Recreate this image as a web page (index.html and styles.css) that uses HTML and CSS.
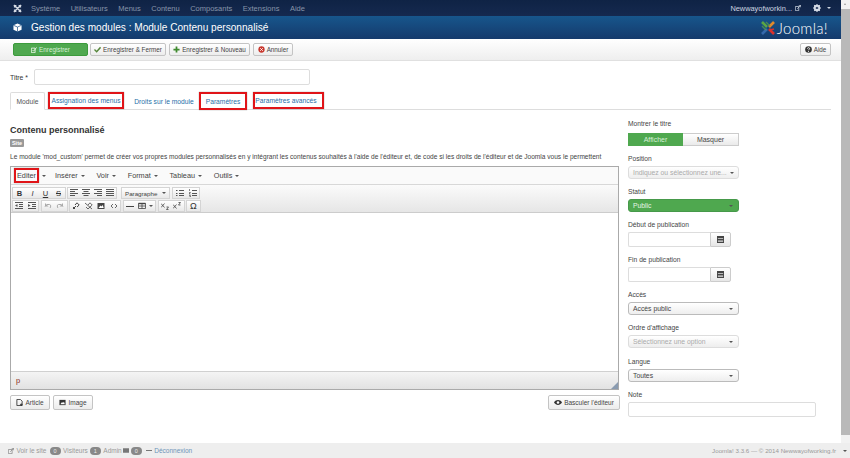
FILE: index.html

```html
<!DOCTYPE html>
<html lang="fr">
<head>
<meta charset="utf-8">
<title>Gestion des modules : Module Contenu personnalisé</title>
<link rel="stylesheet" href="styles.css">
</head>
<body>
<svg class="defs" width="0" height="0">
  <symbol id="lines-l" viewBox="0 0 8 8"><path d="M0 .5h8M0 2.500h5M0 4.500h8M0 6.500h5" stroke="#555" fill="none"/></symbol>
  <symbol id="lines-c" viewBox="0 0 8 8"><path d="M0 .5h8M1.500 2.500h5M0 4.500h8M1.500 6.500h5" stroke="#555" fill="none"/></symbol>
  <symbol id="lines-r" viewBox="0 0 8 8"><path d="M0 .5h8M3 2.500h5M0 4.500h8M3 6.500h5" stroke="#555" fill="none"/></symbol>
  <symbol id="lines-j" viewBox="0 0 8 8"><path d="M0 .5h8M0 2.500h8M0 4.500h8M0 6.500h8" stroke="#555" fill="none"/></symbol>
  <symbol id="cal" viewBox="0 0 8 8"><path d="M0 0h8v8H0z" fill="#444"/><path d="M1 2.500h6v1H1zM1 5h6v1.500H1z" fill="#ddd"/></symbol>
</svg>
<div class="shell">
  <div class="top">
    <div class="main">
      <nav class="navbar">
        <svg class="jicon" viewBox="0 0 10 10" width="9" height="9"><path d="M1 1l8 8M9 1l-8 8M3 1v2H1M7 1v2h2M1 7h2v2M9 7H7v2" stroke="#d5dbe5" stroke-width="1.600" fill="none"/></svg>
        <a class="nav-item">Système</a>
        <a class="nav-item">Utilisateurs</a>
        <a class="nav-item">Menus</a>
        <a class="nav-item">Contenu</a>
        <a class="nav-item">Composants</a>
        <a class="nav-item">Extensions</a>
        <a class="nav-item">Aide</a>
        <span class="nav-right">
          <span class="site-name">Newwayofworkin...</span>
          <svg viewBox="0 0 8 8" width="6" height="6"><path d="M.5 2h4.500v5.500H.5zM3 5l4.500-4.500M5 .5h2.500V3" stroke="#cdd5e0" fill="none"/></svg>
          <svg class="gear" viewBox="0 0 10 10" width="8" height="8"><circle cx="5" cy="5" r="3" fill="none" stroke="#d5dbe5" stroke-width="2"/><path d="M5 0v10M0 5h10M1.500 1.500l7 7M8.500 1.500l-7 7" stroke="#d5dbe5" stroke-width="1.300"/><circle cx="5" cy="5" r="1.300" fill="#14294f"/></svg>
          <span class="caret light"></span>
        </span>
      </nav>
      <header class="titlebar">
        <svg viewBox="0 0 10 10" width="9" height="9"><path d="M5 .5l4.500 2v5L5 9.500l-4.500-2v-5z" fill="#fff"/><path d="M.5 2.500L5 4.500l4.500-2M5 4.500v5" stroke="#1a4f85" stroke-width=".8" fill="none"/></svg>
        <h1>Gestion des modules : Module Contenu personnalisé</h1>
        <div class="logo">
          <svg viewBox="0 0 16 16" width="16" height="16">
            <path d="M2 2l5 5" stroke="#5aa544" stroke-width="2.600"/>
            <path d="M14 2L9 7" stroke="#e08a2c" stroke-width="2.600"/>
            <path d="M2 14l5-5" stroke="#3569ad" stroke-width="2.600"/>
            <path d="M14 14L9 9" stroke="#d9302c" stroke-width="2.600"/>
            <path d="M2 6l4 4M6 2l4 4" stroke="#5aa544" stroke-width="1.400" opacity=".7"/>
            <path d="M10 10l4-1" stroke="#d9302c" stroke-width="1.800"/>
          </svg>
          <span class="logo-text">Joomla!</span>
        </div>
      </header>
      <div class="toolbar">
        <button class="btn btn-green"><svg viewBox="0 0 8 8" width="6" height="6"><path d="M.5 1.500h5v6h-5z" fill="none" stroke="#fff"/><path d="M2 4l1.500 1.500L7.500.5" stroke="#fff" fill="none"/></svg>Enregistrer</button>
        <button class="btn save-close"><svg viewBox="0 0 8 8" width="7" height="7"><path d="M.5 4l2.500 2.500L7.500 1.500" stroke="#55863a" stroke-width="1.700" fill="none"/></svg>Enregistrer &amp; Fermer</button>
        <button class="btn save-new"><svg viewBox="0 0 8 8" width="7" height="7"><path d="M4 .5v7M.5 4h7" stroke="#3f8a2e" stroke-width="2"/></svg>Enregistrer &amp; Nouveau</button>
        <button class="btn cancel"><svg viewBox="0 0 8 8" width="7" height="7"><circle cx="4" cy="4" r="3.600" fill="#c9382e"/><path d="M2.500 2.500l3 3M5.500 2.500l-3 3" stroke="#fff"/></svg>Annuler</button>
        <button class="btn help"><svg viewBox="0 0 8 8" width="7" height="7"><circle cx="4" cy="4" r="3.800" fill="#333"/><path d="M2.800 3c0-1.500 2.400-1.500 2.400 0 0 1-1.200 .9-1.200 1.900M4 5.800v1" stroke="#fff" fill="none"/></svg>Aide</button>
      </div>
      <div class="content">
        <div class="title-row">
          <label class="title-label">Titre *</label>
          <div class="input title-input"></div>
        </div>
        <ul class="tabs">
          <li class="tab active">Module</li>
          <li class="tab marked tab-assign">Assignation des menus</li>
          <li class="tab tab-rights">Droits sur le module</li>
          <li class="tab marked tab-params">Paramètres</li>
          <li class="tab marked tab-adv">Paramètres avancés</li>
        </ul>
        <div class="columns">
          <section class="left">
            <h2>Contenu personnalisé</h2>
            <span class="site-badge">Site</span>
            <p class="desc">Le module 'mod_custom' permet de créer vos propres modules personnalisés en y intégrant les contenus souhaités à l'aide de l'éditeur et, de code si les droits de l'éditeur et de Joomla vous le permettent</p>
            <div class="editor">
              <div class="menubar">
                <span class="menu-item marked menu-edit">Editer</span><span class="caret after-mark"></span>
                <span class="menu-item">Insérer<span class="caret"></span></span>
                <span class="menu-item">Voir<span class="caret"></span></span>
                <span class="menu-item">Format<span class="caret"></span></span>
                <span class="menu-item">Tableau<span class="caret"></span></span>
                <span class="menu-item">Outils<span class="caret"></span></span>
              </div>
              <div class="mce-tools">
                <div class="tool-row">
                  <div class="group">
                    <b class="tool">B</b><i class="tool">I</i><u class="tool">U</u><s class="tool">S</s>
                  </div>
                  <div class="group align">
                    <span class="tool"><svg width="8" height="8"><use href="#lines-l"/></svg></span>
                    <span class="tool"><svg width="8" height="8"><use href="#lines-c"/></svg></span>
                    <span class="tool"><svg width="8" height="8"><use href="#lines-r"/></svg></span>
                    <span class="tool"><svg width="8" height="8"><use href="#lines-j"/></svg></span>
                  </div>
                  <div class="group para"><span class="para-text">Paragraphe</span><span class="caret"></span></div>
                  <div class="group">
                    <span class="tool"><svg viewBox="0 0 8 8" width="8" height="8"><path d="M3 1.500h5M3 4.500h5M3 6.500h5" stroke="#555"/><path d="M0 1h1.500v1H0zM0 4h1.500v1H0zM0 6h1.500v1H0z" fill="#555"/></svg></span>
                    <span class="tool"><svg viewBox="0 0 8 8" width="8" height="8"><path d="M3 1.500h5M3 4.500h5M3 6.500h5" stroke="#555"/><path d="M.5 0v2M0 3.500h1.500L0 5h1.500M0 6.500h1.500v1.500H0" stroke="#555" stroke-width=".7" fill="none"/></svg></span>
                  </div>
                </div>
                <div class="tool-row second">
                  <div class="group">
                    <span class="tool"><svg viewBox="0 0 8 8" width="8" height="8"><path d="M0 .5h8M4 2.500h4M4 4.500h4M0 6.500h8" stroke="#555"/><path d="M2.500 2v3L0 3.500z" fill="#555"/></svg></span>
                    <span class="tool"><svg viewBox="0 0 8 8" width="8" height="8"><path d="M0 .5h8M4 2.500h4M4 4.500h4M0 6.500h8" stroke="#555"/><path d="M0 2v3l2.500-1.500z" fill="#555"/></svg></span>
                  </div>
                  <div class="group">
                    <span class="tool"><svg viewBox="0 0 8 8" width="8" height="8"><path d="M1 4.500L3 2.500h2.500C7 2.500 7 5 6 6" stroke="#aaa" fill="none"/><path d="M1 1v3.500h3.500z" fill="#aaa"/></svg></span>
                    <span class="tool"><svg viewBox="0 0 8 8" width="8" height="8"><path d="M7 4.500L5 2.500H2.500C1 2.500 1 5 2 6" stroke="#aaa" fill="none"/><path d="M7 1v3.500H3.500z" fill="#aaa"/></svg></span>
                  </div>
                  <div class="group">
                    <span class="tool"><svg viewBox="0 0 8 8" width="8" height="8"><path d="M1 7l3-3M3 3l2-2.200 2.200 2.200L5 5M1 5l2 2" stroke="#444" fill="none"/></svg></span>
                    <span class="tool"><svg viewBox="0 0 8 8" width="8" height="8"><path d="M3 3l2-2.200 2.200 2.200L5 5M1 5l2 2 2-2M0 1l7 6" stroke="#444" stroke-width=".8" fill="none"/></svg></span>
                    <span class="tool"><svg viewBox="0 0 8 8" width="8" height="8"><path d="M.5 1h7v6h-7z" fill="#444"/><path d="M1.500 6l2-2.500 1 1 1.200-1.500 1 3z" fill="#fff"/></svg></span>
                    <span class="tool"><svg viewBox="0 0 8 8" width="8" height="8"><path d="M3 2L1 4l2 2M5 2l2 2-2 2" stroke="#444" stroke-width=".8" fill="none"/></svg></span>
                  </div>
                  <div class="group">
                    <span class="tool"><svg viewBox="0 0 8 8" width="8" height="8"><path d="M0 4.500h8" stroke="#444"/></svg></span>
                    <span class="tool wide"><svg viewBox="0 0 8 8" width="8" height="8"><path d="M.5 1.500h7v5h-7zM.5 4h7M4 1.500v5" stroke="#444" stroke-width=".8" fill="none"/><path d="M.5 1.500h7" stroke="#444" stroke-width="1.400"/></svg><span class="caret"></span></span>
                  </div>
                  <div class="group">
                    <span class="tool"><svg viewBox="0 0 8 8" width="8" height="8"><path d="M0 1.500l3.500 4M3.500 1.500l-3.500 4M5.500 5h2L5.500 7.500h2" stroke="#444" fill="none" stroke-width=".8"/></svg></span>
                    <span class="tool"><svg viewBox="0 0 8 8" width="8" height="8"><path d="M0 2.500l3.500 4M3.500 2.500l-3.500 4M5.500 .5h2L5.500 3h2" stroke="#444" fill="none" stroke-width=".8"/></svg></span>
                  </div>
                  <div class="group"><span class="tool omega">Ω</span></div>
                </div>
              </div>
              <div class="edit-area"></div>
              <div class="statusbar">
                <span class="path">p</span>
                <svg class="resize" viewBox="0 0 8 8" width="7" height="7"><path d="M8 0v8H0z" fill="#8a9bb0"/></svg>
              </div>
            </div>
            <div class="editor-buttons">
              <button class="btn small"><svg viewBox="0 0 8 8" width="7" height="7"><path d="M1 .5h4l2 2v5H1z" fill="none" stroke="#333"/><path d="M6 5v3M4.500 6.500h3" stroke="#333"/></svg>Article</button>
              <button class="btn small"><svg viewBox="0 0 8 8" width="7" height="7"><path d="M.5 1h7v6h-7z" fill="#333"/><path d="M1.500 6l2-2.500 1 1 1.200-1.500 1 3z" fill="#fff"/></svg>Image</button>
              <button class="btn small toggle-editor"><svg viewBox="0 0 10 8" width="8" height="7"><path d="M0 4c2.500-4 7.500-4 10 0-2.500 4-7.500 4-10 0z" fill="#333"/><circle cx="5" cy="4" r="1.600" fill="#fff"/></svg>Basculer l'éditeur</button>
            </div>
          </section>
          <aside class="side">
            <label class="field-label">Montrer le titre</label>
            <div class="switch field-box">
              <span class="switch-on">Afficher</span><span class="switch-off">Masquer</span>
            </div>
            <label class="field-label">Position</label>
            <div class="select field-box disabled"><span>Indiquez ou sélectionnez une...</span><span class="caret"></span></div>
            <label class="field-label">Statut</label>
            <div class="select field-box published"><span>Public</span><span class="caret"></span></div>
            <label class="field-label">Début de publication</label>
            <div class="date field-box"><span class="date-input"></span><span class="date-btn"><svg width="7" height="7"><use href="#cal"/></svg></span></div>
            <label class="field-label">Fin de publication</label>
            <div class="date field-box"><span class="date-input"></span><span class="date-btn"><svg width="7" height="7"><use href="#cal"/></svg></span></div>
            <label class="field-label">Accès</label>
            <div class="select field-box"><span>Accès public</span><span class="caret"></span></div>
            <label class="field-label">Ordre d'affichage</label>
            <div class="select field-box disabled order"><span>Sélectionnez une option</span><span class="caret"></span></div>
            <label class="field-label">Langue</label>
            <div class="select field-box"><span>Toutes</span><span class="caret"></span></div>
            <label class="field-label">Note</label>
            <div class="input note-input"></div>
          </aside>
        </div>
      </div>
    </div>
    <div class="scrollbar">
      <span class="arrow-up"></span>
      <span class="thumb"></span>
    </div>
  </div>
  <footer class="statusline">
    <svg viewBox="0 0 8 8" width="6" height="6"><path d="M.5 2h5v5.500h-5zM3 5l4.500-4.500M5 .5h2.500V3" stroke="#888" fill="none"/></svg>
    <span class="st-text st-site">Voir le site</span>
    <span class="pill">0</span><span class="st-text">Visiteurs</span>
    <span class="pill">1</span><span class="st-text">Admin</span>
    <svg viewBox="0 0 8 6" width="6" height="5"><path d="M0 0h8v6H0z" fill="#777"/></svg>
    <span class="pill">0</span>
    <span class="st-dash"></span>
    <span class="st-text st-logout">Déconnexion</span>
    <span class="st-right">Joomla! 3.3.6 — © 2014 Newwayofworking.fr</span>
    <span class="caret st-caret"></span>
  </footer>
</div>
</body>
</html>
```

FILE: styles.css

```css
html, body {
  margin: 0;
  padding: 0;
  height: 100%;
  overflow: hidden;
  background: #fff;
}
body {
  font-family: "Liberation Sans", Arial, sans-serif;
  font-size: 7px;
  color: #444;
}
.defs { position: absolute; }
.shell {
  display: flex;
  flex-direction: column;
  width: 850px;
  height: 458px;
}
.top { display: flex; height: 443px; }
.main { width: 841px; overflow: hidden; }

/* navbar */
.navbar {
  display: flex;
  align-items: center;
  height: 16px;
  padding: 0 10px 0 13px;
  background: linear-gradient(#0f2345, #15294f);
}
.jicon { margin-right: 9px; }
.nav-item {
  margin-right: 10.500px;
  font-size: 7.500px;
  color: #8794a9;
}
.nav-right {
  display: flex;
  align-items: center;
  margin-left: auto;
  color: #cdd5e0;
  font-size: 7.400px;
}
.site-name { margin-right: 3px; }
.gear { margin-left: 12px; margin-right: 3px; }

.caret {
  display: inline-block;
  width: 0;
  height: 0;
  margin-left: 3px;
  border-left: 2px solid transparent;
  border-right: 2px solid transparent;
  border-top: 2px solid #555;
}
.caret.light { border-top-color: #cdd5e0; }

/* blue title bar */
.titlebar {
  display: flex;
  align-items: center;
  height: 23px;
  padding: 0 13px;
  background: linear-gradient(#17568c, #153a6c);
  color: #fff;
}
.titlebar h1 {
  margin: 0 0 0 9px;
  font-size: 10.100px;
  font-weight: normal;
}
.logo {
  display: flex;
  align-items: center;
  margin-left: auto;
}
.logo-text {
  margin-left: 1px;
  font-family: Lato, "Open Sans", sans-serif;
  font-weight: 300;
  font-size: 15px;
  letter-spacing: .3px;
  color: #fff;
}

/* toolbar */
.toolbar {
  display: flex;
  align-items: center;
  height: 22px;
  padding: 0 10px 0 13px;
  box-sizing: border-box;
  background: linear-gradient(#fff, #eee);
  border-bottom: 1px solid #e0e0e0;
}
.btn {
  display: inline-flex;
  align-items: center;
  justify-content: center;
  gap: 2px;
  box-sizing: border-box;
  height: 13px;
  padding: 0;
  font: 6.300px "Liberation Sans", Arial, sans-serif;
  white-space: nowrap;
  color: #444;
  background: linear-gradient(#fff, #ececec);
  border: 1px solid #c4c4c4;
  border-radius: 2px;
}
.btn-green {
  width: 75px;
  background: #4fa84f;
  border-color: #3c9a3c;
  color: #d8f0d8;
}
.save-close { width: 76px; margin-left: 2px; }
.save-new { width: 81px; margin-left: 3px; }
.cancel { width: 40px; margin-left: 3px; }
.help { width: 31px; margin-left: auto; }

/* form */
.content { padding: 8px 10px 0 10px; }
.title-row { display: flex; align-items: center; }
.title-label { width: 24px; font-size: 6.800px; color: #333; }
.input {
  box-sizing: border-box;
  background: #fff;
  border: 1px solid #ddd;
  border-radius: 2px;
}
.title-input { width: 276px; height: 16px; }

.tabs {
  display: flex;
  height: 18px;
  margin: 7px 0 0 0;
  padding: 0;
  list-style: none;
  border-bottom: 1px solid #ddd;
  box-sizing: border-box;
  color: #1f6fa8;
  font-size: 6.700px;
}
.tab {
  display: flex;
  align-items: center;
  justify-content: center;
  box-sizing: border-box;
  height: 18px;
  white-space: nowrap;
}
.tab.active {
  width: 35px;
  color: #555;
  background: #fff;
  border: 1px solid #ddd;
  border-bottom-color: #fff;
  border-radius: 2px 2px 0 0;
}
.marked {
  box-sizing: border-box;
  border: 2px solid #e01418;
  box-shadow: 0 0 1px #888;
}
.tab-assign { width: 76px; margin-left: 3px; height: 17px; }
.tab-rights { width: 75px; padding-left: 5px; }
.tab-params { width: 48px; }
.tab-adv { width: 71px; margin-left: 6px; height: 17px; padding-right: 5px; }

.columns { display: flex; }
.left { width: 610px; padding-top: 14px; }
.left h2 {
  margin: 0;
  font-size: 9px;
  line-height: 12px;
  font-weight: bold;
  color: #333;
}
.site-badge {
  display: block;
  width: 14px;
  height: 8px;
  margin-top: 3px;
  background: #999;
  border-radius: 1px;
  color: #fff;
  font-size: 5.500px;
  font-weight: bold;
  line-height: 8px;
  text-align: center;
}
.desc {
  margin: 5px 0 5px 0;
  font-size: 6.580px;
  line-height: 9px;
  white-space: nowrap;
  color: #444;
}

/* tinymce look */
.editor {
  box-sizing: border-box;
  width: 609px;
  height: 224px;
  display: flex;
  flex-direction: column;
  border: 1px solid #aaa;
  background: #fff;
}
.menubar {
  display: flex;
  align-items: center;
  flex: none;
  height: 18px;
  box-sizing: border-box;
  padding-left: 3px;
  border-bottom: 1px solid #d8d8d8;
  background: #fafafa;
  font-size: 7.300px;
}
.menu-item { margin-right: 11.700px; color: #444; display: flex; align-items: center; }
.menu-edit {
  width: 25px;
  height: 15px;
  margin-right: 0;
  justify-content: center;
}
.after-mark { margin-right: 9px; }
.mce-tools {
  flex: none;
  height: 28px;
  padding: 2px 1px 0 1px;
  box-sizing: border-box;
  background: linear-gradient(#fbfbfb, #e6e6e6);
  border-bottom: 1px solid #ccc;
}
.tool-row { display: flex; gap: 1px; height: 13px; }
.tool-row.second { gap: 1.500px; }
.group {
  display: flex;
  align-items: center;
  height: 12px;
  background: linear-gradient(#fff, #e8e8e8);
  border: 1px solid #d4d4d4;
  box-sizing: border-box;
}
.tool {
  display: flex;
  align-items: center;
  justify-content: center;
  width: 13px;
  font-size: 7.500px;
  color: #333;
}
.align .tool { width: 12px; }
.second .tool { width: 12.500px; }
.second .tool.wide { width: 19px; }
.omega { font-size: 9px; }
.para { width: 49px; padding: 0 3px; margin: 0 1px 0 3px; justify-content: space-between; }
.para-text { font-size: 6.200px; }
.edit-area { flex: 1; background: #fff; }
.statusbar {
  display: flex;
  align-items: center;
  justify-content: space-between;
  flex: none;
  height: 18px;
  padding: 0 0 0 5px;
  border-top: 1px solid #d0d0d0;
  background: linear-gradient(#f4f4f4, #e2e2e2);
  box-sizing: border-box;
}
.path { color: #8a2a20; font-size: 7.500px; }
.resize { align-self: flex-end; }
.editor-buttons { display: flex; margin-top: 5px; gap: 3px; }
.btn.small { height: 15px; width: 40px; font-size: 6.500px; }
.btn.small.toggle-editor { width: 72px; margin-left: auto; }

/* right column */
.side { width: 188px; margin-left: 8px; padding-top: 9px; }
.field-label {
  display: block;
  height: 9px;
  margin-bottom: 3px;
  font-size: 6.700px;
  line-height: 9px;
  color: #444;
}
.field-box { margin-bottom: 8px; }
.field-box.order { margin-bottom: 9px; }
.switch {
  display: flex;
  width: 111px;
  height: 13px;
  margin-top: 5px;
  font-size: 7px;
}
.switch-on {
  flex: 0 0 55px;
  background: #4fa84f;
  color: #d8f0d8;
  text-align: center;
  line-height: 13px;
}
.switch-off {
  flex: 1;
  border: 1px solid #ccc;
  border-left: 0;
  box-sizing: border-box;
  background: linear-gradient(#fff, #eaeaea);
  text-align: center;
  line-height: 11px;
}
.select {
  display: flex;
  align-items: center;
  justify-content: space-between;
  box-sizing: border-box;
  width: 111px;
  height: 13px;
  padding: 0 5px 0 4px;
  background: linear-gradient(#fff, #eee);
  border: 1px solid #bbb;
  border-radius: 3px;
  font-size: 6.800px;
  white-space: nowrap;
}
.select.disabled { color: #aaa; border-color: #ddd; }
.select.published { background: #4fa84f; border-color: #46994a; color: #e4f4e4; }
.date { display: flex; width: 103px; height: 15px; }
.date-input {
  flex: 1;
  border: 1px solid #ddd;
  border-right: 0;
  box-sizing: border-box;
  border-radius: 2px 0 0 2px;
}
.date-btn {
  display: flex;
  align-items: center;
  justify-content: center;
  flex: 0 0 21px;
  border: 1px solid #ccc;
  box-sizing: border-box;
  border-radius: 0 2px 2px 0;
  background: linear-gradient(#fff, #e6e6e6);
}
.note-input { width: 188px; height: 15px; }

/* fake browser scrollbar */
.scrollbar {
  display: flex;
  flex-direction: column;
  width: 9px;
  background: #f2f2f2;
}
.arrow-up {
  flex: none;
  width: 0;
  height: 0;
  margin: 3px 0 4px 3px;
  border-left: 1.500px solid transparent;
  border-right: 1.500px solid transparent;
  border-bottom: 2px solid #999;
}
.thumb { display: block; height: 426px; background: #b9b9b9; }

/* footer status */
.statusline {
  display: flex;
  align-items: center;
  height: 15px;
  padding: 0 0 0 8px;
  background: #eee;
  font-size: 6.500px;
  color: #999;
}
.statusline svg { margin-right: 1px; }
.st-text { margin: 0 1px 0 1.500px; }
.st-site { margin-right: 2px; }
.pill {
  width: 11px;
  height: 8px;
  margin: 0 1px;
  border-radius: 4px;
  background: #888;
  color: #eee;
  font-size: 5.500px;
  line-height: 8px;
  text-align: center;
}
.st-dash { width: 6px; height: 1px; margin: 0 1px 0 3px; background: #777; }
.st-logout { color: #6d93b8; }
.st-right { margin-left: auto; font-size: 6.200px; }
.st-caret { margin: 0 3px 0 7px; }
```
